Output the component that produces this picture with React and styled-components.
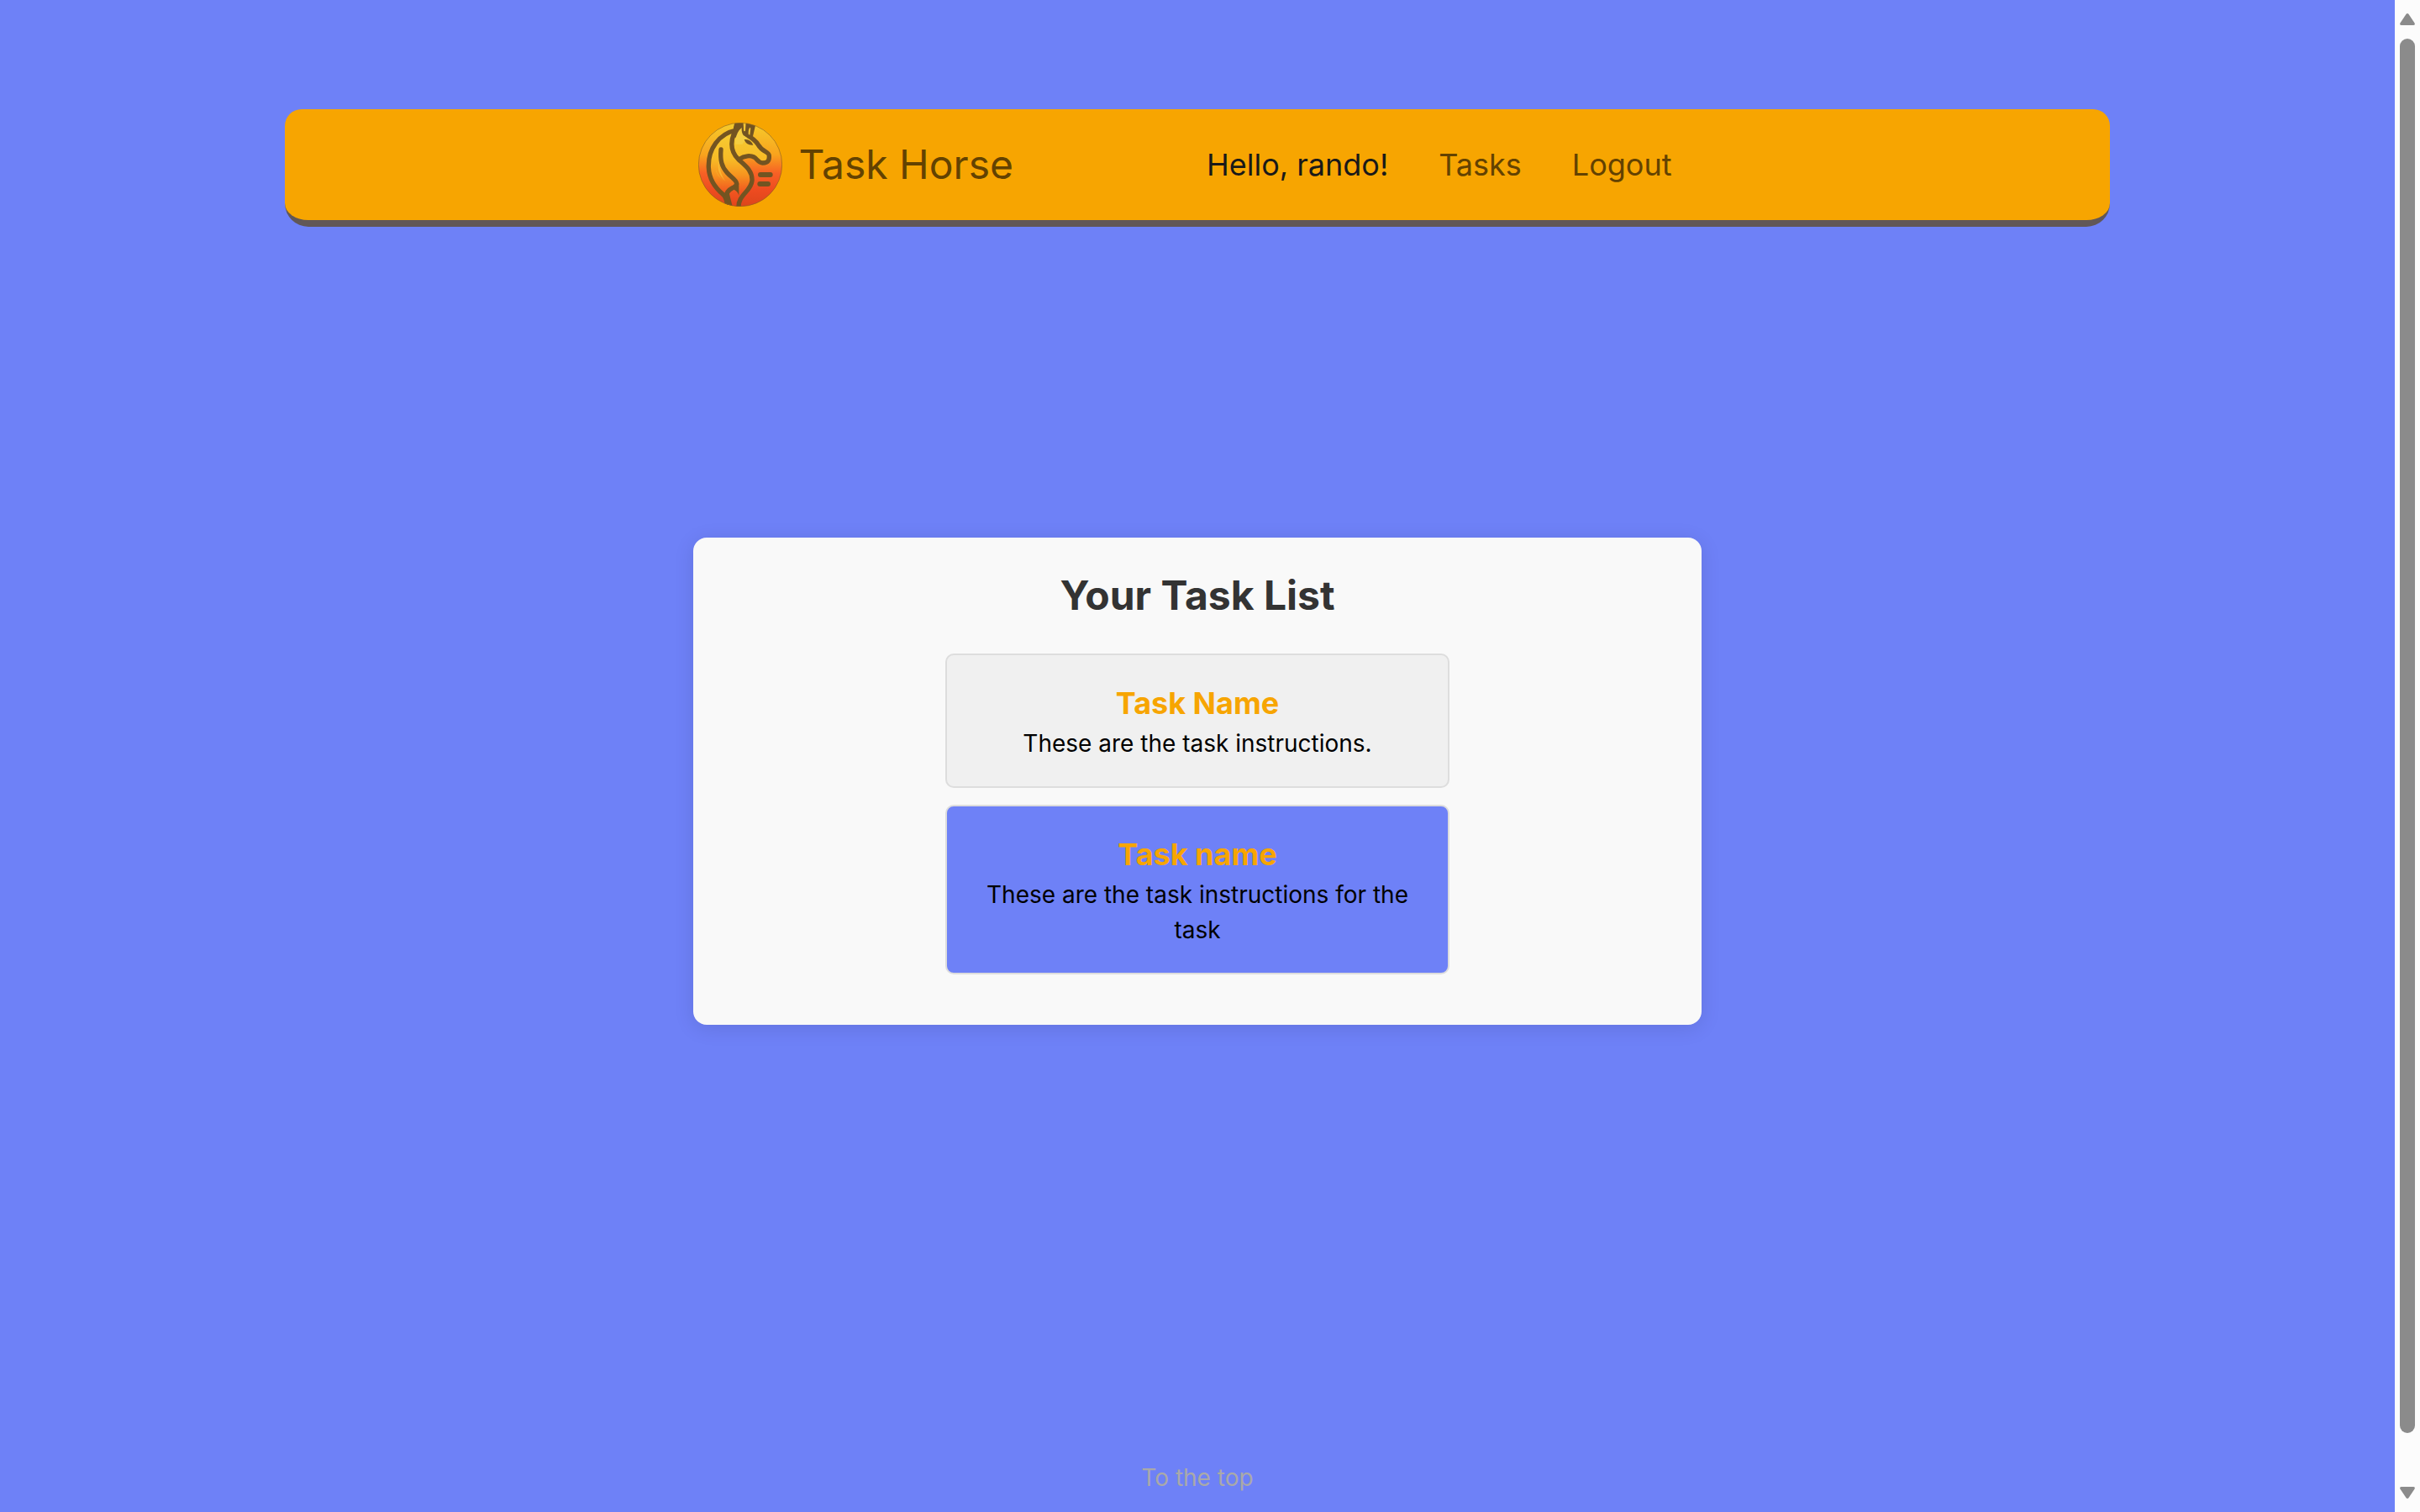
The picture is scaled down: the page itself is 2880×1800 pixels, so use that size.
import React from "react";
import styled, { createGlobalStyle } from "styled-components";

const GlobalStyle = createGlobalStyle`
  * { box-sizing: border-box; }
  body {
    margin: 0;
    overflow: hidden;
    background: #6e81f7;
    font-family: Inter, "Liberation Sans", sans-serif;
    font-size: 28px;
    line-height: 1.5;
    color: #000;
  }
  h1, h2, p, ul { margin: 0; padding: 0; }
  a { text-decoration: none; }
`;

const Screen = styled.div`
  display: flex;
  height: 1800px;
`;

const Page = styled.div`
  flex: 1;
  display: flex;
  flex-direction: column;
  align-items: center;
  padding: 130px 0 20px;
`;

const NavBar = styled.header`
  width: 2172px;
  height: 140px;
  display: flex;
  justify-content: center;
  align-items: center;
  gap: 230px;
  padding-right: 30px;
  background: #f7a501;
  border-bottom: 8px solid #615757;
  border-radius: 20px 20px 28px 28px;
`;

const Brand = styled.a`
  display: flex;
  align-items: center;
  gap: 20px;
  font-size: 48px;
  color: #634201;
`;

const Logo = styled.svg`
  width: 100px;
  height: 100px;
`;

const NavLinks = styled.nav`
  display: flex;
  gap: 60px;
  font-size: 36px;
`;

const NavLink = styled.a`
  color: ${(p) => (p.$active ? "#191919" : "#634201")};
`;

const Card = styled.main`
  width: 1200px;
  margin-top: 370px;
  padding: 40px 40px 60px;
  display: flex;
  flex-direction: column;
  align-items: center;
  background: #f9f9f9;
  border-radius: 16px;
  box-shadow: 0 4px 24px rgba(0, 0, 0, 0.1);
`;

const Title = styled.h1`
  font-size: 48px;
  line-height: 58px;
  font-weight: 700;
  color: #333;
`;

const TaskList = styled.ul`
  width: 600px;
  margin-top: 40px;
  display: flex;
  flex-direction: column;
  gap: 20px;
  list-style: none;
`;

const Task = styled.li`
  padding: 30px;
  text-align: center;
  background: ${(p) => (p.$selected ? "#6e81f7" : "#f0f0f0")};
  border: 2px solid #ddd;
  border-radius: 10px;
`;

const TaskName = styled.h2`
  font-size: 36px;
  font-weight: 700;
  color: #f7a501;
`;

const TopLink = styled.a`
  margin-top: auto;
  color: #a9a9a9;
`;

const ScrollTrack = styled.div`
  width: 30px;
  display: flex;
  flex-direction: column;
  align-items: center;
  padding: 16px 0;
  background: #fcfcfc;
`;

const ScrollThumb = styled.div`
  width: 18px;
  height: 1660px;
  margin: 16px 0 auto;
  border-radius: 9px;
  background: #8b8b8b;
`;

const Arrow = styled.svg`
  width: 18px;
  height: 14px;
  fill: #8b8b8b;
  transform: ${(p) => (p.$down ? "rotate(180deg)" : "none")};
`;

const ScrollArrow = ({ down }) => (
  <Arrow $down={down} viewBox="0 0 18 14">
    <path d="M7.4 1Q9-.9 10.6 1L17.6 11.5Q18.5 14 16 14H2Q-.5 14 .4 11.5Z" />
  </Arrow>
);

const HorseLogo = () => (
  <Logo viewBox="33 33 300 300">
    <defs>
      <linearGradient id="coat" x1="0" y1="0" x2="0" y2="1">
        <stop offset="0" stopColor="#f5cf36" />
        <stop offset="0.4" stopColor="#f7bb26" />
        <stop offset="0.6" stopColor="#f7941f" />
        <stop offset="0.82" stopColor="#f15520" />
        <stop offset="1" stopColor="#e5431b" />
      </linearGradient>
      <linearGradient id="sky" x1="0" y1="0" x2="0" y2="1">
        <stop offset="0" stopColor="#f6cc2c" />
        <stop offset="0.38" stopColor="#f8a31d" />
        <stop offset="0.6" stopColor="#f76125" />
        <stop offset="0.8" stopColor="#ee4b20" />
        <stop offset="1" stopColor="#dc451b" />
      </linearGradient>
      <clipPath id="disc"><circle cx="183" cy="183" r="149.5" /></clipPath>
    </defs>
    <g clipPath="url(#disc)">
      <rect x="33" y="33" width="300" height="300" fill="url(#sky)" />
      <path
        d="M170 60C105 72 68 130 70 198C73 240 95 272 126 300L132 333H178C176 290 222 280 225 238C224 205 200 190 174 168L192 152C220 146 235 162 248 174C268 184 290 176 287 152C284 135 262 134 246 108C236 92 222 82 207 75L184 50Z"
        fill="url(#coat)"
      />
      <path d="M106 165C100 205 108 220 130 242Q108 214 106 165ZM94 195Q98 226 126 240Q102 228 94 195Z" fill="#f8c23b" opacity=".75" />
      <g fill="none" stroke="#735421" strokeWidth="16" strokeLinecap="round" strokeLinejoin="round">
        <path d="M168 60C108 72 67 126 70 194C72 236 98 270 122 290C136 302 133 318 140 338" />
        <path d="M114 129C111 168 116 190 136 212C150 228 168 236 170 250C171 260 162 262 154 267C140 274 133 284 131 300" />
        <path d="M160 72C148 104 150 138 176 164C200 186 227 204 225 240C222 279 174 290 177 338" />
        <path d="M180 163C198 150 220 150 232 156C243 162 246 176 263 177C283 176 287 167 286 151C286 138 261 137 247 112C236 94 222 86 206 77" />
      </g>
      <path d="M124 293L143 284L156 336H131Z" fill="#735421" />
      <path d="M164 262L178 250V294Q174 278 160 272Z" fill="#735421" />
      <path d="M158 72Q157 44 166 30H194L196 62L200 40L205 30H240L228 82L206 84L180 76L164 88Z" fill="#735421" />
      <path d="M194 30H203L201 62Q196 66 195 60Z" fill="#f4c534" />
      <path d="M166 94Q170 66 188 51Q187 70 194 78L208 88L190 110H166Z" fill="#f5ce42" />
      <path d="M212 74Q211 58 217 50L220 54L217 77Z" fill="#f4c534" />
      <path d="M197 93Q220 90 229 113Q204 115 197 93Z" fill="#735421" />
      <rect x="246" y="210" width="53" height="18" rx="9" fill="#735421" />
      <rect x="244" y="243" width="47" height="18" rx="9" fill="#735421" />
    </g>
    <circle cx="183" cy="183" r="149" fill="none" stroke="#8f651c" strokeWidth="2" />
  </Logo>
);

export default function App() {
  return (
    <Screen>
      <GlobalStyle />
      <Page>
        <NavBar>
          <Brand><HorseLogo />Task Horse</Brand>
          <NavLinks>
            <NavLink $active>Hello, rando!</NavLink>
            <NavLink>Tasks</NavLink>
            <NavLink>Logout</NavLink>
          </NavLinks>
        </NavBar>
        <Card>
          <Title>Your Task List</Title>
          <TaskList>
            <Task>
              <TaskName>Task Name</TaskName>
              <p>These are the task instructions.</p>
            </Task>
            <Task $selected>
              <TaskName>Task name</TaskName>
              <p>These are the task instructions for the task</p>
            </Task>
          </TaskList>
        </Card>
        <TopLink>To the top</TopLink>
      </Page>
      <ScrollTrack>
        <ScrollArrow />
        <ScrollThumb />
        <ScrollArrow down />
      </ScrollTrack>
    </Screen>
  );
}
